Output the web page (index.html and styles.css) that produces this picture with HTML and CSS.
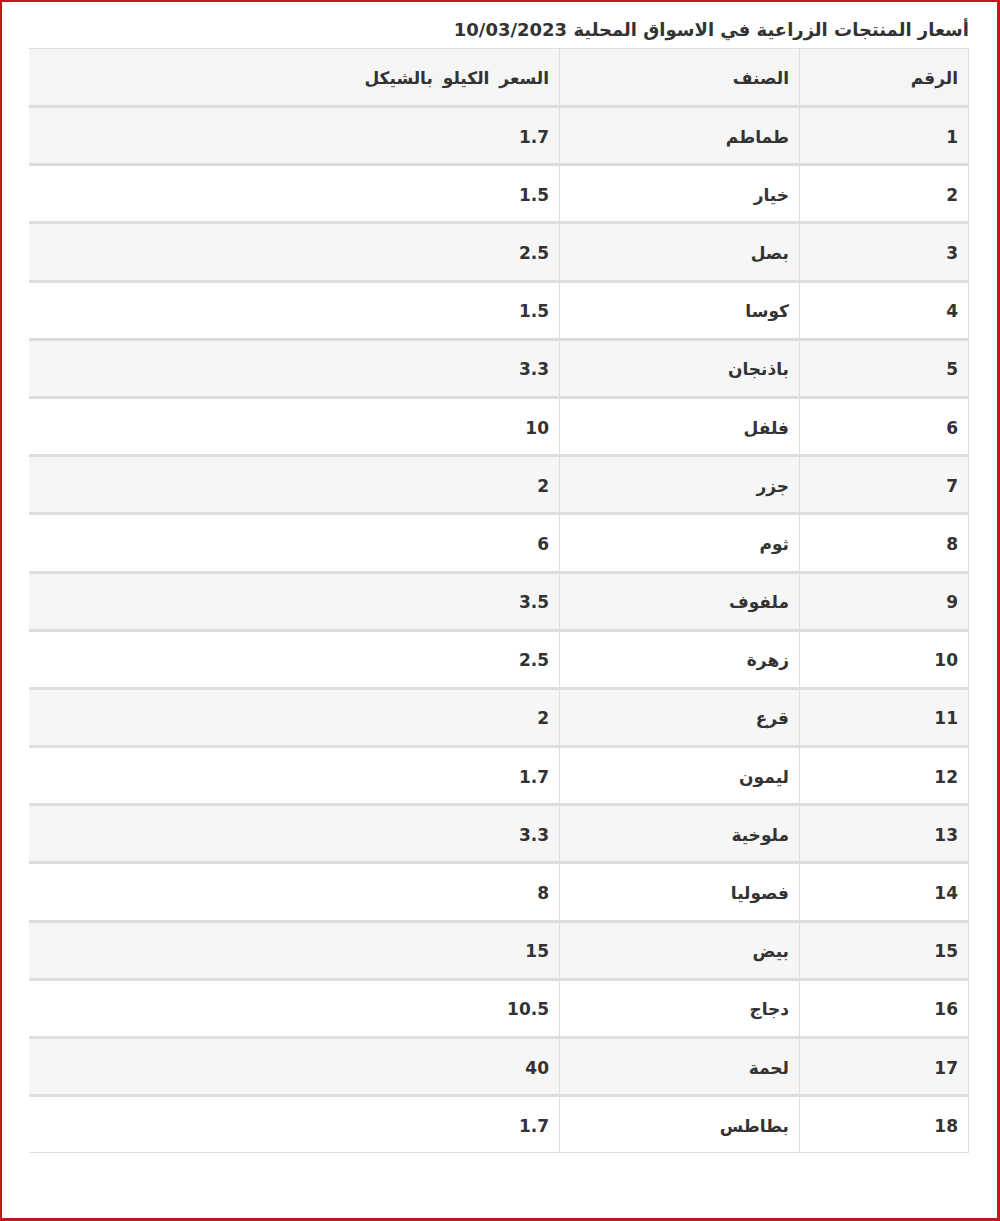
FILE: index.html
```html
<!DOCTYPE html>
<html lang="ar" dir="rtl">
<head>
<meta charset="utf-8">
<link rel="stylesheet" href="styles.css">
</head>
<body>
<div class="frame">
  <h1 class="title">أسعار المنتجات الزراعية في الاسواق المحلية 10/03/2023</h1>
  <table class="prices">
    <colgroup><col class="c-num"><col class="c-kind"><col class="c-price"></colgroup>
    <thead>
      <tr><th>الرقم</th><th>الصنف</th><th class="wide">السعر الكيلو بالشيكل</th></tr>
    </thead>
    <tbody>
      <tr><td>1</td><td>طماطم</td><td>1.7</td></tr>
      <tr><td>2</td><td>خيار</td><td>1.5</td></tr>
      <tr><td>3</td><td>بصل</td><td>2.5</td></tr>
      <tr><td>4</td><td>كوسا</td><td>1.5</td></tr>
      <tr><td>5</td><td>باذنجان</td><td>3.3</td></tr>
      <tr><td>6</td><td>فلفل</td><td>10</td></tr>
      <tr><td>7</td><td>جزر</td><td>2</td></tr>
      <tr><td>8</td><td>ثوم</td><td>6</td></tr>
      <tr><td>9</td><td>ملفوف</td><td>3.5</td></tr>
      <tr><td>10</td><td>زهرة</td><td>2.5</td></tr>
      <tr><td>11</td><td>قرع</td><td>2</td></tr>
      <tr><td>12</td><td>ليمون</td><td>1.7</td></tr>
      <tr><td>13</td><td>ملوخية</td><td>3.3</td></tr>
      <tr><td>14</td><td>فصوليا</td><td>8</td></tr>
      <tr><td>15</td><td>بيض</td><td>15</td></tr>
      <tr><td>16</td><td>دجاج</td><td>10.5</td></tr>
      <tr><td>17</td><td>لحمة</td><td>40</td></tr>
      <tr><td>18</td><td>بطاطس</td><td>1.7</td></tr>
    </tbody>
  </table>
</div>
</body>
</html>
```
FILE: styles.css
```css
html, body {
  margin: 0;
  padding: 0;
  background: #ffffff;
}
.frame {
  box-sizing: border-box;
  width: 1000px;
  height: 1221px;
  border: 3px solid #c3161d;
  border-top-width: 2px;
  border-left-width: 2px;
  padding: 16px 28px 0 27px;
  font-family: "DejaVu Sans", "Noto Sans", sans-serif;
  color: #333333;
}
.title {
  margin: 0 0 6px 0;
  font-size: 18px;
  line-height: 24px;
  font-weight: bold;
  text-align: right;
  color: #333333;
  letter-spacing: -0.3px;
}
.prices {
  width: 940px;
  border-collapse: collapse;
  table-layout: fixed;
  font-size: 17px;
}
.c-num { width: 169px; }
.c-kind { width: 240px; }
.c-price { width: 531px; }
.prices th,
.prices td {
  text-align: right;
  font-weight: bold;
  padding: 2px 10px 0 9px;
  height: 53.2px;
  border-left: 1px solid #dddddd;
  border-right: 1px solid #dddddd;
  border-top: 3px solid #dddddd;
  vertical-align: middle;
  color: #333333;
}
.prices thead th {
  border-top: 1px solid #dddddd;
  height: 54px;
  background: #f5f5f5;
}
.prices thead th.wide {
  word-spacing: 4px;
}
.prices tbody tr:nth-child(odd) td {
  background: #f6f6f6;
}
.prices tbody tr:last-child td {
  border-bottom: 1px solid #dddddd;
}
.prices td:last-child,
.prices th:last-child {
  border-left: none;
}
```
